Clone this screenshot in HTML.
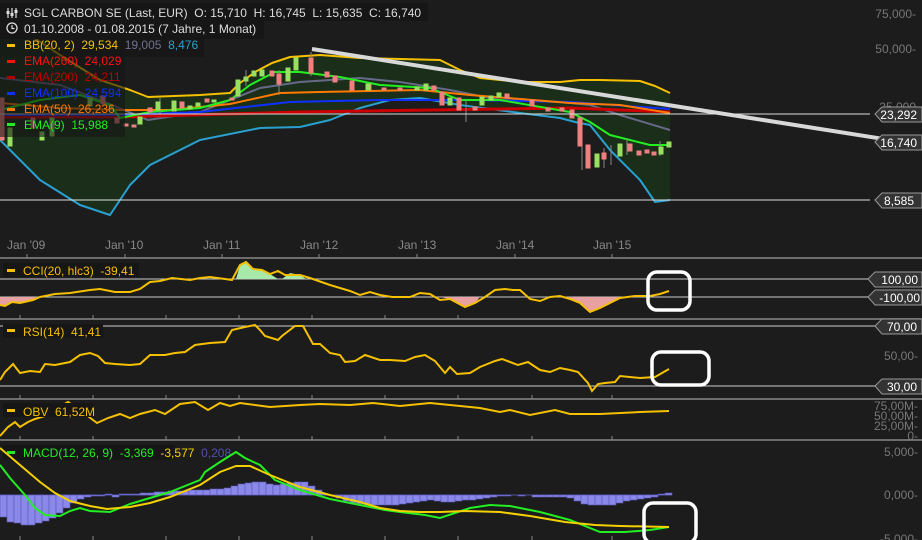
<!DOCTYPE html>
<html><head><meta charset="utf-8"><style>
html,body{margin:0;padding:0;background:#1c1c1c;width:922px;height:540px;overflow:hidden}
svg{display:block}
text{font-family:"Liberation Sans",sans-serif;white-space:pre}
</style></head><body>
<svg width="922" height="540" viewBox="0 0 922 540" xmlns="http://www.w3.org/2000/svg" xml:space="preserve">
<rect width="922" height="540" fill="#1c1c1c"/>
<polygon fill="#1a2e1a" points="0,30 30,35 60,55 100,80 130,90 148,97 200,95 230,93 240,83 255,72 272,63 290,57 320,55 360,58 440,60 460,70 480,78 520,82 560,82 580,80 600,80 640,81 655,86 670,93 670,200 655,202 640,180 610,150 590,125 575,122 560,118 520,113 460,105 420,98 390,100 360,108 330,120 300,127 260,128 200,140 150,165 130,185 110,215 80,205 40,180 0,140"/>
<g stroke="#888" stroke-width="1.5">
<line x1="0" y1="258" x2="922" y2="258"/><line x1="0" y1="319" x2="922" y2="319"/><line x1="0" y1="399" x2="922" y2="399"/><line x1="0" y1="440" x2="922" y2="440"/>
</g>
<g stroke="#888" stroke-width="1">
<line x1="27" y1="254" x2="27" y2="258"/><line x1="125" y1="254" x2="125" y2="258"/><line x1="222" y1="254" x2="222" y2="258"/><line x1="319" y1="254" x2="319" y2="258"/><line x1="417" y1="254" x2="417" y2="258"/><line x1="515" y1="254" x2="515" y2="258"/><line x1="612" y1="254" x2="612" y2="258"/>
<line x1="20" y1="315" x2="20" y2="319"/><line x1="93" y1="315" x2="93" y2="319"/><line x1="166" y1="315" x2="166" y2="319"/><line x1="239" y1="315" x2="239" y2="319"/><line x1="312" y1="315" x2="312" y2="319"/><line x1="385" y1="315" x2="385" y2="319"/><line x1="458" y1="315" x2="458" y2="319"/>
<line x1="20" y1="395" x2="20" y2="399"/><line x1="93" y1="395" x2="93" y2="399"/><line x1="166" y1="395" x2="166" y2="399"/><line x1="239" y1="395" x2="239" y2="399"/><line x1="312" y1="395" x2="312" y2="399"/><line x1="385" y1="395" x2="385" y2="399"/><line x1="458" y1="395" x2="458" y2="399"/><line x1="532" y1="395" x2="532" y2="399"/><line x1="612" y1="395" x2="612" y2="399"/>
<line x1="20" y1="436" x2="20" y2="440"/><line x1="93" y1="436" x2="93" y2="440"/><line x1="166" y1="436" x2="166" y2="440"/><line x1="239" y1="436" x2="239" y2="440"/><line x1="312" y1="436" x2="312" y2="440"/><line x1="385" y1="436" x2="385" y2="440"/><line x1="458" y1="436" x2="458" y2="440"/><line x1="532" y1="436" x2="532" y2="440"/><line x1="612" y1="436" x2="612" y2="440"/>
<line x1="20" y1="536" x2="20" y2="540"/><line x1="93" y1="536" x2="93" y2="540"/><line x1="166" y1="536" x2="166" y2="540"/><line x1="239" y1="536" x2="239" y2="540"/><line x1="312" y1="536" x2="312" y2="540"/><line x1="385" y1="536" x2="385" y2="540"/><line x1="458" y1="536" x2="458" y2="540"/><line x1="532" y1="536" x2="532" y2="540"/><line x1="612" y1="536" x2="612" y2="540"/>
</g>
<g fill="none" stroke-width="2" stroke-linejoin="round">
<polyline stroke="#f5c000" points="0,30 30,35 60,55 100,80 130,90 148,97 200,95 230,93 240,83 255,72 272,63 290,57 320,55 360,58 440,60 460,70 480,78 520,82 560,82 580,80 600,80 640,81 655,86 670,93"/>
<polyline stroke="#2aa0d0" points="0,140 40,180 80,205 110,215 130,185 150,165 200,140 260,128 300,127 330,120 360,108 390,100 420,98 460,105 520,113 560,118 575,122 590,125 610,150 640,180 655,202 670,200"/>
<polyline stroke="#666a88" points="0,78 60,85 100,100 148,120 200,112 260,88 300,82 360,78 400,82 450,90 500,100 560,102 590,105 620,115 670,130"/>
<polyline stroke="#cc0000" stroke-width="3" points="0,117 120,117 300,112 570,108 670,112"/>
<polyline stroke="#1030ff" points="0,115 120,115 200,112 290,102 380,100 470,100 570,102 670,109"/>
<polyline stroke="#ff7a00" points="0,103 60,108 120,110 170,110 230,104 280,93 320,92 420,90 470,95 570,103 620,105 670,113"/>
<polyline stroke="#22ee22" points="0,110 40,100 80,95 110,105 120,118 150,112 200,108 230,100 250,85 275,72 300,72 340,77 380,85 430,88 460,100 500,100 570,112 590,122 610,135 630,140 650,145 670,145"/>
</g>
<g stroke-width="1">
<g stroke="#888"><line x1="160" y1="98" x2="160" y2="114"/><line x1="246" y1="70" x2="246" y2="86"/><line x1="279" y1="70" x2="279" y2="95"/><line x1="311" y1="52" x2="311" y2="76"/><line x1="466" y1="100" x2="466" y2="122"/><line x1="582" y1="140" x2="582" y2="170"/><line x1="604" y1="148" x2="604" y2="168"/><line x1="611" y1="145" x2="611" y2="165"/><line x1="627" y1="138" x2="627" y2="155"/><line x1="660" y1="141" x2="660" y2="156"/></g>
<g fill="#f08080" stroke="#f08080">
<rect x="0" y="98" width="4" height="42"/><rect x="31" y="118" width="4" height="10"/><rect x="101" y="96" width="4" height="8"/><rect x="115" y="118" width="4" height="5"/><rect x="124" y="124" width="4" height="2"/><rect x="132" y="125" width="4" height="2"/><rect x="148" y="108" width="4" height="4"/><rect x="180" y="102" width="4" height="6"/><rect x="205" y="99" width="4" height="3"/><rect x="230" y="98" width="4" height="2"/><rect x="270" y="71" width="4" height="5"/><rect x="277" y="74" width="4" height="10"/><rect x="309" y="58" width="4" height="15"/><rect x="325" y="72" width="4" height="5"/><rect x="333" y="76" width="4" height="6"/><rect x="350" y="81" width="4" height="9"/><rect x="367" y="84" width="4" height="6"/><rect x="382" y="88" width="4" height="2"/><rect x="398" y="88" width="4" height="2"/><rect x="432" y="86" width="4" height="4"/><rect x="440" y="92" width="4" height="13"/><rect x="457" y="98" width="4" height="12"/><rect x="473" y="107" width="4" height="3"/><rect x="505" y="94" width="4" height="4"/><rect x="530" y="100" width="4" height="6"/><rect x="546" y="108" width="4" height="3"/><rect x="560" y="108" width="4" height="3"/><rect x="570" y="110" width="4" height="8"/><rect x="578" y="118" width="4" height="28"/><rect x="586" y="145" width="4" height="23"/><rect x="602" y="153" width="4" height="6"/><rect x="628" y="144" width="4" height="7"/><rect x="637" y="151" width="4" height="4"/><rect x="645" y="150" width="4" height="3"/><rect x="652" y="152" width="4" height="3"/>
</g>
<g fill="#9ae060" stroke="#9ae060">
<rect x="8" y="128" width="4" height="18"/><rect x="40" y="132" width="4" height="8"/><rect x="50" y="118" width="4" height="18"/><rect x="88" y="98" width="4" height="8"/><rect x="138" y="117" width="4" height="7"/><rect x="156" y="102" width="4" height="8"/><rect x="172" y="101" width="4" height="10"/><rect x="188" y="106" width="4" height="3"/><rect x="196" y="103" width="4" height="3"/><rect x="212" y="100" width="4" height="2"/><rect x="236" y="80" width="4" height="16"/><rect x="244" y="77" width="4" height="4"/><rect x="252" y="71" width="4" height="5"/><rect x="260" y="70" width="4" height="6"/><rect x="286" y="68" width="4" height="13"/><rect x="294" y="58" width="4" height="12"/><rect x="366" y="84" width="4" height="6"/><rect x="415" y="87" width="4" height="3"/><rect x="424" y="84" width="4" height="6"/><rect x="448" y="98" width="4" height="7"/><rect x="480" y="97" width="4" height="8"/><rect x="489" y="96" width="4" height="4"/><rect x="497" y="93" width="4" height="4"/><rect x="595" y="154" width="4" height="13"/><rect x="618" y="144" width="4" height="12"/><rect x="659" y="147" width="4" height="7"/><rect x="667" y="142" width="4" height="5"/>
</g>
</g>
<line x1="312" y1="49" x2="922" y2="145" stroke="#d8d8d8" stroke-width="4"/>
<line x1="0" y1="114" x2="870" y2="114" stroke="#ddd" stroke-width="1"/>
<line x1="0" y1="200" x2="870" y2="200" stroke="#ddd" stroke-width="1"/>
<rect x="0" y="3" width="428" height="18" fill="#161616"/>
<rect x="0" y="21" width="264" height="18" fill="#161616"/>
<rect x="0" y="39" width="204" height="18" fill="#161616" opacity="0.7"/>
<rect x="0" y="57" width="125" height="80" fill="#161616" opacity="0.6"/>
<g font-size="12">
<g stroke="#ddd" stroke-width="1.2"><line x1="8" y1="8" x2="8" y2="18"/><line x1="12" y1="8" x2="12" y2="18"/><line x1="16" y1="8" x2="16" y2="18"/></g>
<g fill="#ddd"><rect x="6.5" y="11" width="3" height="3"/><rect x="10.5" y="13" width="3" height="3"/><rect x="14.5" y="10" width="3" height="3"/></g>
<text x="24" y="17" fill="#ddd">SGL CARBON SE (Last, EUR)  O: 15,710  H: 16,745  L: 15,635  C: 16,740</text>
<circle cx="12" cy="28" r="5" fill="none" stroke="#ddd" stroke-width="1.3"/><path d="M12 25v3.5h2.5" fill="none" stroke="#ddd" stroke-width="1.2"/>
<text x="24" y="33" fill="#ddd">01.10.2008 - 01.08.2015 (7 Jahre, 1 Monat)</text>
<rect x="7" y="44" width="8" height="3" fill="#f5c000"/><text x="24" y="49" fill="#f5c000">BB(20, 2)  29,534  <tspan fill="#707090">19,005</tspan>  <tspan fill="#2aa0d0">8,476</tspan></text>
<rect x="7" y="60" width="8" height="3" fill="#ff1010"/><text x="24" y="65" fill="#ff1010">EMA(260)  24,029</text>
<rect x="7" y="76" width="8" height="3" fill="#b00000"/><text x="24" y="81" fill="#c00000">EMA(200)  24,211</text>
<rect x="7" y="92" width="8" height="3" fill="#1030ff"/><text x="24" y="97" fill="#1030ff">EMA(100)  24,594</text>
<rect x="7" y="108" width="8" height="3" fill="#ff7a00"/><text x="24" y="113" fill="#ff7a00">EMA(50)  26,236</text>
<rect x="7" y="123" width="8" height="3" fill="#22ee22"/><text x="24" y="129" fill="#22ee22">EMA(9)  15,988</text>
</g>
<g font-size="12" fill="#888">
<text x="7" y="249">Jan '09</text><text x="105" y="249">Jan '10</text><text x="203" y="249">Jan '11</text><text x="300" y="249">Jan '12</text><text x="398" y="249">Jan '13</text><text x="496" y="249">Jan '14</text><text x="593" y="249">Jan '15</text>
</g>
<g font-size="12" fill="#777" text-anchor="end">
<text x="916" y="18">75,000-</text><text x="916" y="53">50,000-</text><text x="916" y="111">25,000</text>
<text x="918" y="360">50,00-</text>
<text x="918" y="410">75,00M-</text><text x="918" y="420">50,00M-</text><text x="918" y="430">25,00M-</text><text x="918" y="440">0-</text>
<text x="918" y="456">5,000-</text><text x="918" y="499">0,000-</text><text x="918" y="543">-5,000-</text>
</g>
<g fill="#333" stroke="#999" stroke-width="1">
<path d="M875 114l7-7h40v15h-40z"/><path d="M875 142l7-7h40v15h-40z"/><path d="M875 200l7-7h40v15h-40z"/>
<path d="M868 279l7-7h47v15h-47z"/><path d="M868 297l7-7h47v15h-47z"/><path d="M875 326l7-7h40v15h-40z"/><path d="M875 386l7-7h40v15h-40z"/>
</g>
<g font-size="12" fill="#fff" text-anchor="end">
<text x="917" y="119">23,292</text><text x="917" y="147">16,740</text><text x="914" y="205">8,585</text>
<text x="918" y="284">100,00</text><text x="920" y="302">-100,00</text><text x="917" y="331">70,00</text><text x="917" y="391">30,00</text>
</g>
<line x1="0" y1="279" x2="868" y2="279" stroke="#ccc"/><line x1="0" y1="297" x2="868" y2="297" stroke="#ccc"/>
<polygon fill="#a8e8a8" points="236,279 240,265 246,262 253,269 262,270 270,274 278,279"/><polygon fill="#a8e8a8" points="282,279 290,273 300,275 306,279"/>
<polygon fill="#e8a0a0" points="0,297 0,305 5,306 12,302 20,303 33,300 36,297"/>
<polygon fill="#e8a0a0" points="440,297 450,299 465,307 475,303 480,297"/>
<polygon fill="#e8a0a0" points="565,297 570,299 580,303 590,312 600,308 620,298 625,297"/>
<polyline fill="none" stroke="#f5c000" stroke-width="2" points="0,305 5,306 12,302 20,303 33,300 40,297 55,294 70,293 90,290 100,289 115,292 130,292 140,289 150,282 160,281 172,278 190,280 200,278 210,277 225,279 232,280 240,265 246,262 253,269 262,270 270,274 278,271 285,275 300,275 310,278 330,285 350,291 360,295 370,292 380,295 392,297 410,297 420,293 430,294 440,300 450,299 465,307 475,303 485,297 495,290 505,289 513,290 520,290 530,299 540,301 550,297 560,296 570,299 580,303 590,312 600,308 620,298 635,296 650,296 660,294 669,291"/>
<line x1="0" y1="326" x2="875" y2="326" stroke="#ccc"/><line x1="0" y1="386" x2="875" y2="386" stroke="#ccc"/>
<polyline fill="none" stroke="#f5c000" stroke-width="2" points="0,380 5,372 13,364 20,373 30,371 40,372 45,364 55,365 70,362 80,355 90,353 98,356 105,363 115,364 130,365 140,364 150,355 165,355 175,353 185,352 195,345 210,343 225,342 232,330 245,327 255,325 260,330 265,336 278,340 282,336 295,326 303,326 313,344 320,344 330,353 340,355 345,362 355,361 365,355 380,360 390,360 405,361 415,357 425,355 435,361 445,373 450,367 457,374 470,373 480,367 495,361 502,359 518,365 528,362 540,370 550,372 560,368 570,370 578,372 588,383 592,391 598,384 605,383 615,382 620,376 640,378 655,377 669,369"/>
<polyline fill="none" stroke="#f5c000" stroke-width="2" points="0,436 8,427 15,422 20,427 28,422 35,419 45,416 68,402 85,414 97,423 108,418 120,414 130,418 140,414 155,410 165,414 180,404 195,402 208,410 220,403 230,406 240,403 270,407 300,405 320,404 350,405 373,403 400,406 430,403 460,406 480,408 500,412 510,410 530,415 555,410 570,414 600,414 640,412 669,411"/>
<g font-size="12">
<rect x="3" y="263" width="136" height="14" fill="#161616"/><rect x="7" y="269" width="8" height="3" fill="#f5c000"/><text x="23" y="275" fill="#f5c000">CCI(20, hlc3)  -39,41</text>
<rect x="3" y="324" width="100" height="14" fill="#161616"/><rect x="7" y="329" width="8" height="3" fill="#f5c000"/><text x="23" y="336" fill="#f5c000">RSI(14)  41,41</text>
<rect x="3" y="403" width="90" height="14" fill="#161616"/><rect x="7" y="409" width="8" height="3" fill="#f5c000"/><text x="23" y="416" fill="#f5c000">OBV  61,52M</text>
<rect x="3" y="445" width="172" height="15" fill="#161616"/><rect x="7" y="451" width="8" height="3" fill="#22ee22"/><text x="23" y="457" fill="#22ee22">MACD(12, 26, 9)  -3,369  <tspan fill="#f5d000">-3,577</tspan>  <tspan fill="#5050b0">0,208</tspan></text>
</g>
<line x1="0" y1="495" x2="672" y2="495" stroke="#5050a0"/>
<g fill="#8a88e8" stroke="#5a58b8" stroke-width="0.6">
<rect x="0" y="495" width="7" height="22"/><rect x="7" y="495" width="7" height="27"/><rect x="14" y="495" width="7" height="28"/><rect x="21" y="495" width="7" height="30"/><rect x="28" y="495" width="7" height="30"/><rect x="35" y="495" width="7" height="28"/><rect x="42" y="495" width="7" height="26"/><rect x="49" y="495" width="7" height="23"/><rect x="56" y="495" width="7" height="18"/><rect x="63" y="495" width="7" height="13"/><rect x="70" y="495" width="7" height="8"/><rect x="77" y="495" width="7" height="4"/><rect x="84" y="495" width="7" height="2"/><rect x="91" y="495" width="7" height="1"/>
<rect x="98" y="495" width="7" height="1"/><rect x="105" y="494" width="7" height="1"/><rect x="112" y="495" width="7" height="2"/><rect x="119" y="494" width="7" height="1"/><rect x="126" y="494" width="7" height="1"/><rect x="133" y="494" width="7" height="1"/><rect x="140" y="493" width="7" height="2"/><rect x="147" y="493" width="7" height="2"/><rect x="154" y="492" width="7" height="3"/><rect x="161" y="492" width="7" height="3"/><rect x="168" y="491" width="7" height="4"/><rect x="175" y="491" width="7" height="4"/><rect x="182" y="491" width="7" height="4"/><rect x="189" y="490" width="7" height="5"/><rect x="196" y="490" width="7" height="5"/><rect x="203" y="490" width="7" height="5"/><rect x="210" y="489" width="7" height="6"/><rect x="217" y="489" width="7" height="6"/><rect x="224" y="488" width="7" height="7"/><rect x="231" y="486" width="7" height="9"/><rect x="238" y="484" width="7" height="11"/><rect x="245" y="483" width="7" height="12"/><rect x="252" y="482" width="7" height="13"/><rect x="259" y="482" width="7" height="13"/><rect x="266" y="484" width="7" height="11"/><rect x="273" y="485" width="7" height="10"/><rect x="280" y="484" width="7" height="11"/><rect x="287" y="483" width="7" height="12"/><rect x="294" y="482" width="7" height="13"/><rect x="301" y="482" width="7" height="13"/><rect x="308" y="486" width="7" height="9"/><rect x="315" y="490" width="7" height="5"/><rect x="322" y="494" width="7" height="1"/>
<rect x="336" y="495" width="7" height="3"/><rect x="343" y="495" width="7" height="6"/><rect x="350" y="495" width="7" height="8"/><rect x="357" y="495" width="7" height="9"/><rect x="364" y="495" width="7" height="10"/><rect x="371" y="495" width="7" height="10"/><rect x="378" y="495" width="7" height="10"/><rect x="385" y="495" width="7" height="10"/><rect x="392" y="495" width="7" height="10"/><rect x="399" y="495" width="7" height="9"/><rect x="406" y="495" width="7" height="8"/><rect x="413" y="495" width="7" height="7"/><rect x="420" y="495" width="7" height="6"/><rect x="427" y="495" width="7" height="5"/><rect x="434" y="495" width="7" height="6"/><rect x="441" y="495" width="7" height="7"/><rect x="448" y="495" width="7" height="7"/><rect x="455" y="495" width="7" height="6"/><rect x="462" y="495" width="7" height="5"/><rect x="469" y="495" width="7" height="5"/><rect x="476" y="495" width="7" height="4"/><rect x="483" y="495" width="7" height="3"/><rect x="490" y="495" width="7" height="2"/><rect x="497" y="495" width="7" height="1"/><rect x="504" y="495" width="7" height="1"/><rect x="518" y="495" width="7" height="1"/><rect x="532" y="495" width="7" height="2"/><rect x="539" y="495" width="7" height="2"/><rect x="546" y="495" width="7" height="2"/><rect x="553" y="495" width="7" height="2"/><rect x="560" y="495" width="7" height="2"/><rect x="567" y="495" width="7" height="3"/><rect x="574" y="495" width="7" height="6"/><rect x="581" y="495" width="7" height="9"/><rect x="588" y="495" width="7" height="10"/><rect x="595" y="495" width="7" height="10"/><rect x="602" y="495" width="7" height="10"/><rect x="609" y="495" width="7" height="10"/><rect x="616" y="495" width="7" height="8"/><rect x="623" y="495" width="7" height="6"/><rect x="630" y="495" width="7" height="5"/><rect x="637" y="495" width="7" height="4"/><rect x="644" y="495" width="7" height="3"/><rect x="651" y="495" width="7" height="2"/><rect x="658" y="494" width="7" height="1"/><rect x="665" y="493" width="7" height="2"/>
</g>
<polyline fill="none" stroke="#22ee22" stroke-width="2" points="0,465 10,478 25,495 35,508 45,515 60,516 70,511 80,508 90,511 110,512 130,504 150,498 170,492 200,480 205,472 220,462 236,452 245,458 260,465 275,480 300,490 330,499 360,505 385,510 400,512 425,515 440,518 455,513 470,508 490,505 510,506 540,512 570,520 600,532 625,532 650,530 669,527"/>
<polyline fill="none" stroke="#f5d000" stroke-width="2" points="0,448 20,465 40,482 55,493 70,501 90,506 107,509 130,507 150,503 170,497 200,485 220,472 236,466 250,466 270,475 300,487 330,495 360,502 380,508 400,511 420,512 440,512 465,511 500,512 530,516 565,522 595,525 620,526 669,527"/>
<g fill="none" stroke="#fff" stroke-width="3.5">
<rect x="648" y="272" width="42" height="38" rx="9"/>
<rect x="652" y="352" width="57" height="33" rx="9"/>
<rect x="644" y="503" width="52" height="40" rx="9"/>
</g>
</svg>
</body></html>
